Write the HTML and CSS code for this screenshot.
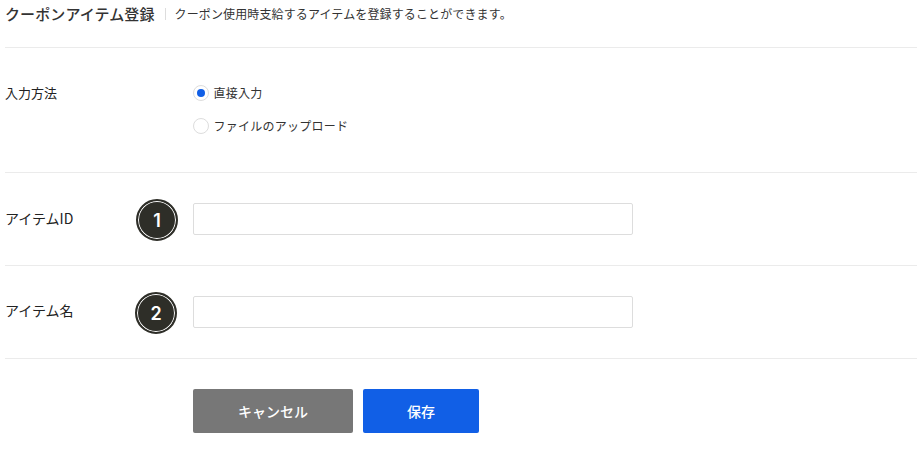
FILE: index.html
```html
<!DOCTYPE html>
<html lang="ja">

<head>
    <meta http-equiv="Content-Type" content="text/html;charset=UTF-8">
    <title>クーポンアイテム登録</title>
    <link rel="stylesheet" href="styles.css">
</head>

<body>
    <div class="head">
        <h1 class="title">クーポンアイテム登録</h1>
        <p class="desc">クーポン使用時支給するアイテムを登録することができます。</p>
    </div>

    <div class="row row-method">
        <div class="label">入力方法</div>
        <div class="options">
            <label class="option"><span class="radio on"></span>直接入力</label>
            <label class="option"><span class="radio"></span>ファイルのアップロード</label>
        </div>
    </div>

    <div class="row row-field">
        <div class="label">アイテムID</div>
        <input class="text" type="text">
        <span class="badge badge-1">1</span>
    </div>

    <div class="row row-field">
        <div class="label">アイテム名</div>
        <input class="text" type="text">
        <span class="badge badge-2">2</span>
    </div>

    <div class="actions">
        <button class="btn btn-cancel">キャンセル</button>
        <button class="btn btn-save">保存</button>
    </div>
</body>

</html>
```

FILE: styles.css
```css
* {
    box-sizing: border-box;
    margin: 0;
    padding: 0;
}

body {
    width: 917px;
    height: 453px;
    overflow: hidden;
    padding-left: 5px;
    background: #fff;
    color: #222;
    font-family: "Noto Sans CJK JP", "Noto Sans", sans-serif;
}

.head {
    display: flex;
    align-items: center;
    height: 48px;
    padding-bottom: 20px;
    border-bottom: 1px solid #ebebeb;
}

.title {
    font-size: 15px;
    font-weight: 500;
    line-height: 28px;
    letter-spacing: 0.1px;
    color: #333;
}

.desc {
    margin-left: 10px;
    padding-left: 9px;
    font-size: 12px;
    line-height: 12px;
    letter-spacing: 0.13px;
    color: #333;
    border-left: 1px solid #ddd;
}

.row {
    position: relative;
    display: flex;
    border-bottom: 1px solid #ebebeb;
}

.row-method {
    height: 125px;
    padding-top: 35px;
}

.row-field {
    height: 93px;
    padding-top: 30px;
}

.label {
    width: 188px;
    font-size: 13px;
    line-height: 20px;
    color: #222;
}

.row-field .label {
    padding-top: 5px;
    font-size: 14px;
}

.row-field + .row-field .label {
    padding-top: 4px;
}

.options {
    display: flex;
    flex-direction: column;
    gap: 13px;
}

.option {
    display: flex;
    align-items: center;
    gap: 5px;
    height: 20px;
    font-size: 12px;
    letter-spacing: 0.25px;
    line-height: 16px;
    color: #333;
}

.radio {
    display: flex;
    align-items: center;
    justify-content: center;
    width: 16px;
    height: 16px;
    margin-left: -0.5px;
    border: 1px solid #ddd;
    border-radius: 50%;
    background: #fff;
}

.radio.on::after {
    content: "";
    width: 8px;
    height: 8px;
    border-radius: 50%;
    background: #115fe6;
}

.text {
    width: 440px;
    height: 32px;
    border: 1px solid #ddd;
    border-radius: 2px;
    background: #fff;
}

.badge {
    position: absolute;
    width: 42px;
    height: 42px;
    display: flex;
    align-items: center;
    justify-content: center;
    border-radius: 50%;
    background: #2e2e28;
    border: 2px solid #2e2e28;
    box-shadow: inset 0 0 0 1px #fff;
    color: #fff;
    font-size: 18px;
    font-weight: 600;
    font-family: "Inter", "Noto Sans", sans-serif;
}

.badge-1 {
    left: 131px;
    top: 26px;
}

.badge-2 {
    left: 130px;
    top: 26px;
}

.actions {
    display: flex;
    gap: 10px;
    padding: 30px 0 0 188px;
}

.btn {
    height: 44px;
    border: 0;
    border-radius: 2px;
    color: #fff;
    font-family: inherit;
    font-size: 14px;
    font-weight: 500;
}

.btn-cancel {
    width: 160px;
    background: #777;
}

.btn-save {
    width: 116px;
    background: #115fe6;
}
```
